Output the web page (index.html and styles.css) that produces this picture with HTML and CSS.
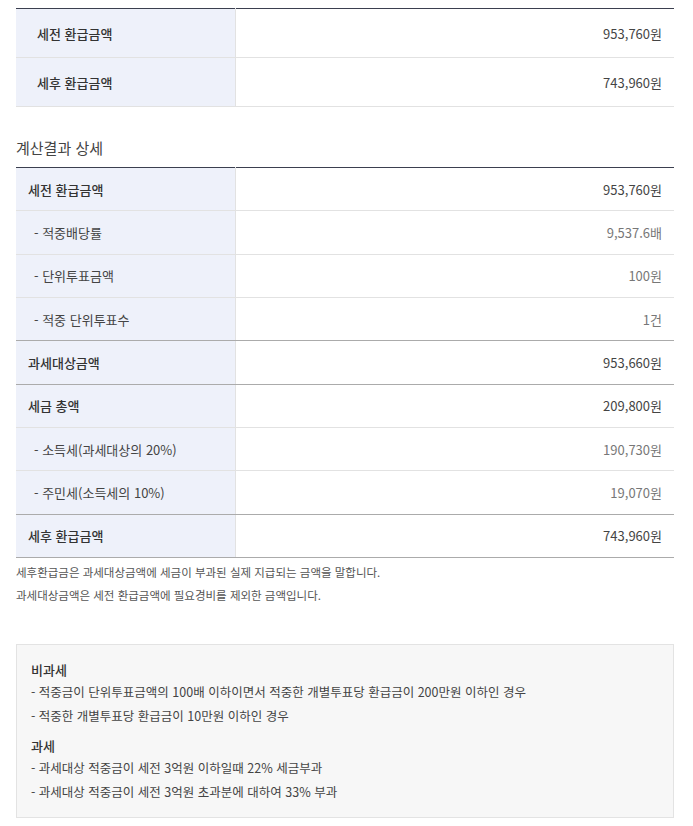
FILE: index.html
```html
<!DOCTYPE html>
<html lang="ko">
<head>
    <meta charset="UTF-8">
    <meta name="viewport" content="width=device-width, initial-scale=1.0">
    <title>계산결과</title>
    <link rel="stylesheet" href="styles.css">
</head>
<body>
    <div class="wrap">
        <table class="result-table summary">
            <tr>
                <th>세전 환급금액</th>
                <td>953,760원</td>
            </tr>
            <tr>
                <th>세후 환급금액</th>
                <td>743,960원</td>
            </tr>
        </table>

        <h3 class="section-title">계산결과 상세</h3>

        <table class="result-table detail">
            <tr class="main">
                <th>세전 환급금액</th>
                <td>953,760원</td>
            </tr>
            <tr class="sub">
                <th>- 적중배당률</th>
                <td>9,537.6배</td>
            </tr>
            <tr class="sub">
                <th>- 단위투표금액</th>
                <td>100원</td>
            </tr>
            <tr class="sub group-end">
                <th>- 적중 단위투표수</th>
                <td>1건</td>
            </tr>
            <tr class="main group-end">
                <th>과세대상금액</th>
                <td>953,660원</td>
            </tr>
            <tr class="main">
                <th>세금 총액</th>
                <td>209,800원</td>
            </tr>
            <tr class="sub">
                <th>- 소득세(과세대상의 20%)</th>
                <td>190,730원</td>
            </tr>
            <tr class="sub group-end">
                <th>- 주민세(소득세의 10%)</th>
                <td>19,070원</td>
            </tr>
            <tr class="main group-end">
                <th>세후 환급금액</th>
                <td>743,960원</td>
            </tr>
        </table>

        <div class="notes">
            <p>세후환급금은 과세대상금액에 세금이 부과된 실제 지급되는 금액을 말합니다.</p>
            <p>과세대상금액은 세전 환급금액에 필요경비를 제외한 금액입니다.</p>
        </div>

        <div class="info-box">
            <h4>비과세</h4>
            <ul>
                <li>- 적중금이 단위투표금액의 100배 이하이면서 적중한 개별투표당 환급금이 200만원 이하인 경우</li>
                <li>- 적중한 개별투표당 환급금이 10만원 이하인 경우</li>
            </ul>
            <h4>과세</h4>
            <ul>
                <li>- 과세대상 적중금이 세전 3억원 이하일때 22% 세금부과</li>
                <li>- 과세대상 적중금이 세전 3억원 초과분에 대하여 33% 부과</li>
            </ul>
        </div>
    </div>
</body>
</html>
```

FILE: styles.css
```css
body {
    margin: 0;
    font-family: "Noto Sans CJK KR", "Noto Sans", sans-serif;
    color: #333;
    background: #fff;
}
.wrap {
    width: 658px;
    margin-left: 16px;
    padding-top: 8px;
}
.result-table {
    width: 100%;
    table-layout: fixed;
    border-collapse: collapse;
    border-top: 1px solid #3b3f4f;
    font-size: 13px;
}
.result-table th {
    box-sizing: border-box;
    width: 219px;
    background: #eef1fa;
    text-align: left;
    font-weight: 500;
    color: #333;
    border-right: 1px solid #e2e2e2;
    border-bottom: 1px solid #e2e2e2;
}
.result-table td {
    text-align: right;
    border-bottom: 1px solid #e2e2e2;
    padding-right: 12px;
    color: #444;
}
.summary th,
.summary td {
    height: 48px;
    padding-top: 0;
    padding-bottom: 0;
}
.summary th {
    padding-left: 21px;
}
.section-title {
    margin: 30px 0 8px;
    font-size: 15px;
    font-weight: 400;
    color: #444;
    line-height: 22px;
}
.detail th,
.detail td {
    height: 42.34px;
    padding-top: 0;
    padding-bottom: 0;
}
.detail th {
    padding-left: 12px;
}
.detail .sub th {
    font-weight: 400;
    padding-left: 18px;
    color: #444;
}
.detail .sub td {
    color: #777;
}
.detail .group-end th,
.detail .group-end td {
    border-bottom: 1px solid #ababab;
}
.notes {
    margin-top: 3px;
    font-size: 11.5px;
    color: #555;
}
.notes p {
    margin: 0;
    line-height: 23px;
}
.info-box {
    margin-top: 37px;
    background: #f7f7f7;
    border: 1px solid #e3e3e3;
    padding: 15px 14px 13px;
    font-size: 12.5px;
    color: #444;
}
.info-box h4 {
    margin: 0;
    font-size: 13px;
    font-weight: 500;
    color: #333;
    line-height: 20px;
}
.info-box ul {
    list-style: none;
    margin: 0 0 8px;
    padding: 0;
}
.info-box ul:last-child {
    margin-bottom: 0;
}
.info-box li {
    line-height: 24px;
}
```
